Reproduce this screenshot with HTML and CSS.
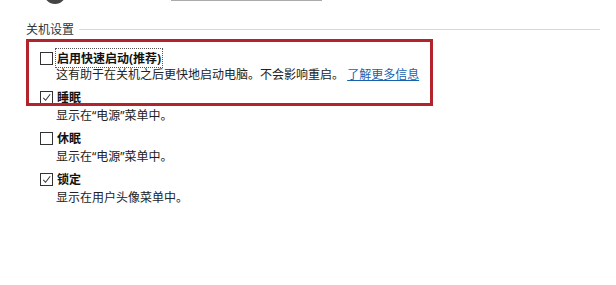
FILE: index.html
```html
<!DOCTYPE html>
<html lang="zh-CN">
<head>
    <meta charset="UTF-8">
    <title>关机设置</title>
    <link rel="stylesheet" href="styles.css">
</head>
<body>
    <div class="top-strip">
        <div class="avatar"></div>
        <div class="field"></div>
    </div>

    <div class="group">
        <div class="group-title">
            <span>关机设置</span>
            <div class="rule"></div>
        </div>

        <div class="option first">
            <div class="row">
                <span class="box"></span>
                <span class="label focus">启用快速启动(推荐)</span>
            </div>
            <div class="desc">这有助于在关机之后更快地启动电脑。不会影响重启。 <a href="#" class="more">了解更多信息</a></div>
        </div>

        <div class="option">
            <div class="row">
                <span class="box"><svg viewBox="0 0 12 12"><polyline points="2.5,6.5 5,9 10,2.5"/></svg></span>
                <span class="label">睡眠</span>
            </div>
            <div class="desc">显示在“电源”菜单中。</div>
        </div>

        <div class="option">
            <div class="row">
                <span class="box"></span>
                <span class="label">休眠</span>
            </div>
            <div class="desc">显示在“电源”菜单中。</div>
        </div>

        <div class="option">
            <div class="row">
                <span class="box"><svg viewBox="0 0 12 12"><polyline points="2.5,6.5 5,9 10,2.5"/></svg></span>
                <span class="label">锁定</span>
            </div>
            <div class="desc">显示在用户头像菜单中。</div>
        </div>

        <!-- 红色标注框 -->
        <div class="highlight"></div>
    </div>
</body>
</html>
```

FILE: styles.css
```css
body {
    margin: 0;
    background-color: #fff;
    color: #1a1a1a;
    font-family: "Noto Sans", "Noto Sans CJK SC", sans-serif;
    font-size: 12px;
    overflow: hidden;
}

.top-strip {
    position: relative;
    height: 4px;
}

.avatar {
    position: absolute;
    left: 44px;
    top: -18px;
    width: 22px;
    height: 22px;
    border-radius: 50%;
    background-color: #444;
}

.field {
    position: absolute;
    left: 171px;
    top: -1px;
    width: 151px;
    height: 2px;
    background-color: #aaa;
}

.group {
    position: relative;
    padding: 16px 0 0 26px;
}

.group-title {
    display: flex;
    align-items: center;
    height: 17px;
    color: #333;
}

.group-title .rule {
    flex: 1;
    height: 1px;
    background-color: #d9d9d9;
    margin: 2px 16px 0 5px;
}

.option {
    padding-left: 14px;
    margin-top: 4px;
}

.option.first {
    margin-top: 12px;
}

.option.first .desc {
    margin-top: -1px;
}

.row {
    display: flex;
    align-items: center;
    height: 18px;
}

.box {
    width: 11px;
    height: 11px;
    border: 1px solid #333;
    background-color: #fff;
    margin-right: 3px;
    flex-shrink: 0;
}

.box svg {
    display: block;
    width: 11px;
    height: 11px;
    fill: none;
    stroke: #333;
    stroke-width: 1.1;
}

.label {
    font-weight: bold;
    color: #111;
    padding: 0 1px;
}

.label.focus {
    outline: 1px dotted #555;
    outline-offset: 0;
}

.desc {
    padding-left: 16px;
    height: 18px;
    line-height: 18px;
    margin-top: 1px;
    color: #222;
}

.more {
    color: #1762b0;
    text-decoration: underline;
}

.highlight {
    position: absolute;
    left: 26px;
    top: 35px;
    width: 401px;
    height: 61px;
    border: 3px solid #b3232b;
}
```
